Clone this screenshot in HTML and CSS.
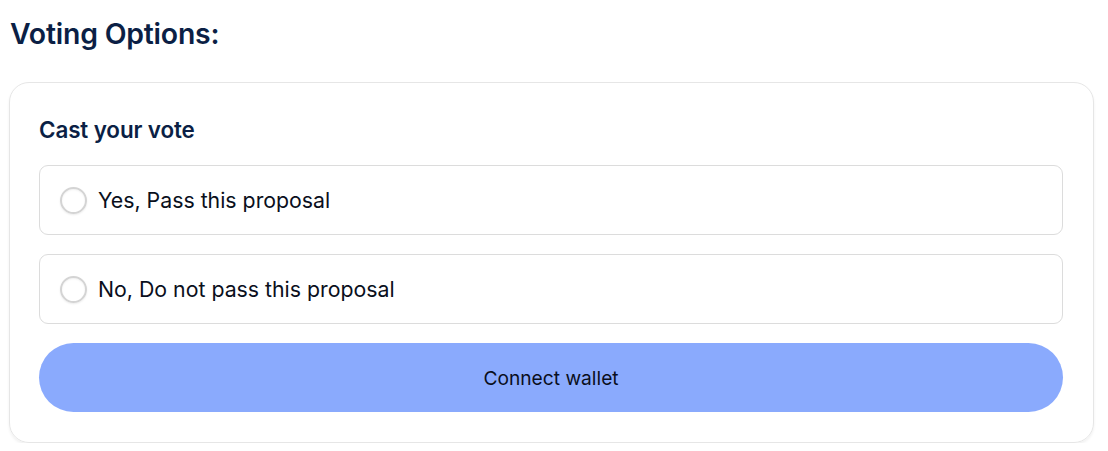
FILE: index.html
```html
<!DOCTYPE html>
<html>
<head>
<meta charset="utf-8">
<link rel="stylesheet" href="styles.css">
</head>
<body>
<div class="page">
  <h2 class="title">Voting Options:</h2>
  <div class="card">
    <h3 class="card-title">Cast your vote</h3>
    <label class="option"><span class="radio"></span><span class="option-text">Yes, Pass this proposal</span></label>
    <label class="option"><span class="radio"></span><span class="option-text">No, Do not pass this proposal</span></label>
    <button class="connect">Connect wallet</button>
  </div>
</div>
</body>
</html>
```
FILE: styles.css
```css
html, body { margin: 0; padding: 0; background: #fff; }
body { font-family: Inter, "Noto Sans", sans-serif; color: #0b1f45; }
.page { padding: 14px 14px 0 9px; }
.title { margin: 0 0 0 1px; font-size: 28.4px; font-weight: 600; line-height: 40px; color: #0b1f45; letter-spacing: -0.2px; }
.card {
  margin-top: 28px;
  border: 1px solid #e6e6e6;
  border-radius: 20px;
  box-shadow: 0 2px 3px rgba(0,0,0,0.06);
  padding: 33px 30px 30px 29px;
  display: flex;
  flex-direction: column;
  gap: 19px;
}
.card-title { margin: 0 0 2px; font-size: 22.4px; font-weight: 600; line-height: 28px; color: #0b1f45; letter-spacing: -0.1px; }
.option {
  display: flex;
  align-items: center;
  height: 68px;
  border: 1px solid #dcdcdc;
  border-radius: 9px;
  padding: 0 20px;
  gap: 11px;
}
.radio {
  width: 23px; height: 23px;
  border: 2px solid #d4d4d4;
  border-radius: 50%;
  box-shadow: inset 0 1px 2px rgba(0,0,0,0.06), 0 1px 2px rgba(0,0,0,0.08);
}
.option-text { font-size: 21.3px; color: #0a0f1c; font-weight: 400; }
.connect {
  height: 69px;
  border: none;
  border-radius: 35px;
  background: #8aaafd;
  font-family: Inter, "Noto Sans", sans-serif;
  font-size: 19.2px;
  color: #0a0f1c;
  font-weight: 400;
}
```
